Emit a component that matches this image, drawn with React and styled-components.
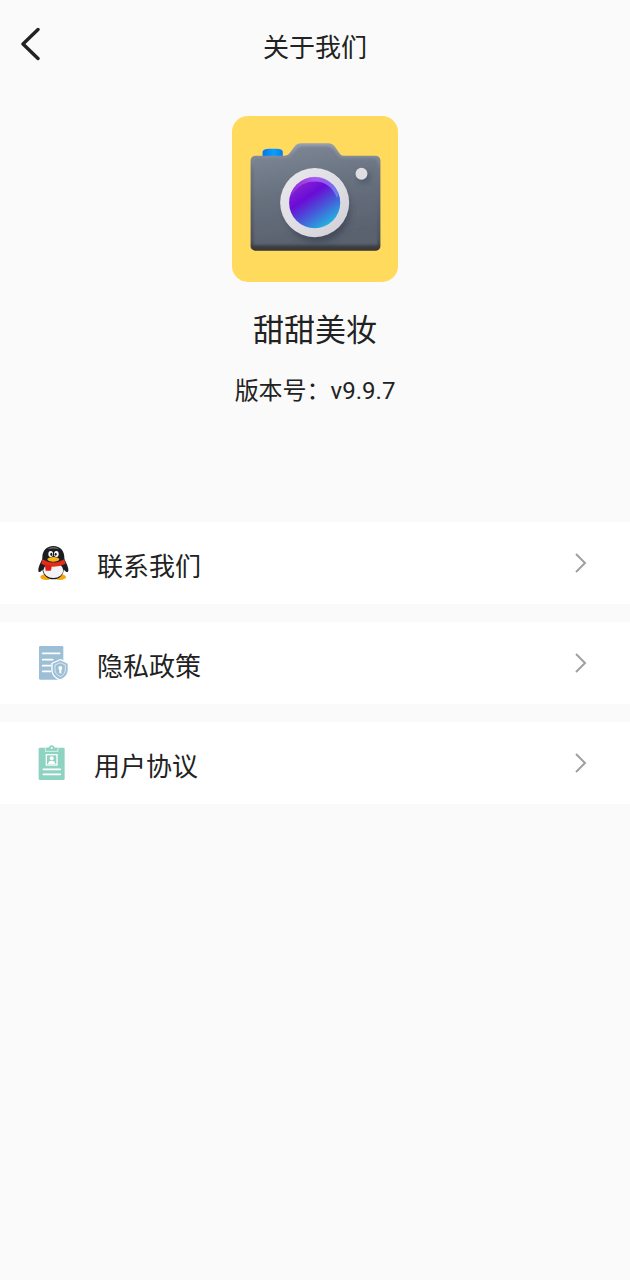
import React from "react";
import styled, { createGlobalStyle } from "styled-components";

const App = () => {
  return (
    <>
      <GlobalStyle />
      <Header>
        <BackButton type="button" aria-label="返回">
          <BackIcon />
        </BackButton>
        <Title>关于我们</Title>
      </Header>

      <main>
        <AppInfo>
          <CameraLogo />
          <AppName>甜甜美妆</AppName>
          <Version>版本号：v9.9.7</Version>
        </AppInfo>

        <Menu>
          <MenuItem href="#contact">
            <PenguinIcon />
            <Label>联系我们</Label>
            <ArrowIcon />
          </MenuItem>
          <MenuItem href="#privacy">
            <PrivacyIcon />
            <Label>隐私政策</Label>
            <ArrowIcon />
          </MenuItem>
          <MenuItem href="#agreement">
            <AgreementIcon />
            <Label>用户协议</Label>
            <ArrowIcon />
          </MenuItem>
        </Menu>
      </main>
    </>
  );
};

export default App;

const BackIcon = () => (
  <svg width="20" height="34" viewBox="0 0 20 34" fill="none" aria-hidden="true">
    <path
      d="M18 2.5 3 17l15 14.5"
      stroke="#222"
      strokeWidth="3.4"
      strokeLinecap="round"
      strokeLinejoin="round"
    />
  </svg>
);

const ArrowIcon = () => (
  <svg width="12" height="20" viewBox="0 0 12 20" fill="none" aria-hidden="true">
    <path d="M1 1l9 9-9 9" stroke="#a0a0a0" strokeWidth="2" />
  </svg>
);

const CameraLogo = () => (
  <svg width="166" height="166" viewBox="21 23 500 500" role="img" aria-label="甜甜美妆">
    <defs>
      <linearGradient id="body" x1="0" y1="0" x2="0.25" y2="1">
        <stop offset="0" stopColor="#808997" />
        <stop offset="0.5" stopColor="#68717f" />
        <stop offset="1" stopColor="#5a6270" />
      </linearGradient>
      <linearGradient id="edge" x1="0" y1="0" x2="0" y2="1">
        <stop offset="0" stopColor="#99a2b0" />
        <stop offset="0.25" stopColor="#6c7481" />
        <stop offset="0.9" stopColor="#4c525d" />
        <stop offset="1" stopColor="#363434" />
      </linearGradient>
      <linearGradient id="button" x1="0" y1="0" x2="1" y2="0">
        <stop offset="0" stopColor="#0873ed" />
        <stop offset="0.55" stopColor="#08a1fa" />
        <stop offset="1" stopColor="#0879f0" />
      </linearGradient>
      <linearGradient id="ring" x1="0" y1="0" x2="1" y2="1">
        <stop offset="0" stopColor="#e9e8ec" />
        <stop offset="0.6" stopColor="#dddce3" />
        <stop offset="1" stopColor="#cfcdd4" />
      </linearGradient>
      <linearGradient id="lens" x1="0.2" y1="0.15" x2="0.75" y2="0.95">
        <stop offset="0" stopColor="#8420d4" />
        <stop offset="0.3" stopColor="#6a0cd6" />
        <stop offset="0.6" stopColor="#4a52d8" />
        <stop offset="1" stopColor="#22b4df" />
      </linearGradient>
      <linearGradient id="shine" x1="0" y1="0" x2="1" y2="0">
        <stop offset="0" stopColor="#bd5bea" stopOpacity="0.4" />
        <stop offset="0.5" stopColor="#c483ff" />
        <stop offset="1" stopColor="#75a8f5" />
      </linearGradient>
      <filter id="soft" x="-30%" y="-30%" width="160%" height="160%">
        <feGaussianBlur stdDeviation="9" />
      </filter>
      <filter id="bevel" x="-10%" y="-10%" width="120%" height="120%">
        <feGaussianBlur stdDeviation="3" />
      </filter>
    </defs>
    <rect x="21" y="23" width="500" height="500" rx="48" fill="#ffda5c" />
    <path d="M113 148v-17q2-9 20-9h22q18 0 19 9v17z" fill="url(#button)" />
    <path
      d="M90 143h88q11 0 18-10l14-19q7-9 19-9h82q12 0 19 9l17 24q4 5 12 5h96q12 2 13 14v260q-2 11-13 12H90q-12-3-13-12V157q1-12 13-14z"
      fill="url(#edge)"
    />
    <path
      d="M94 151h88q13 0 20-11l14-18q6-8 16-8h77q10 0 16 8l17 23q5 6 15 6h94l8 8v252H86V159z"
      fill="url(#body)"
      filter="url(#bevel)"
    />
    <circle cx="279" cy="305" r="98" fill="#353b4b" opacity="0.6" filter="url(#soft)" />
    <circle cx="418" cy="207" r="18" fill="#353b4b" opacity="0.5" filter="url(#soft)" />
    <circle cx="270" cy="284" r="104" fill="url(#ring)" />
    <circle cx="270" cy="284" r="77" fill="url(#lens)" />
    <path
      d="M198 262c9-34 40-56 73-56 34 0 62 22 71 55l-5 8c-12-31-35-49-66-49-30 0-53 14-67 39z"
      fill="url(#shine)"
      opacity="0.6"
    />
    <circle cx="411" cy="197" r="18" fill="#dedde2" />
  </svg>
);

const PenguinIcon = () => (
  <svg width="31" height="36" viewBox="0 0 93 108" aria-hidden="true">
    <ellipse cx="25" cy="96" rx="18" ry="9" fill="#f7a70b" />
    <ellipse cx="66" cy="96" rx="18" ry="9" fill="#f7a70b" />
    <path
      d="M46 3C25 3 13 18 13 37c0 5-1 8-4 13C4 60 0 70 1 77c1 7 7 4 12-3 4 19 17 29 33 29s28-10 32-29c6 7 12 10 13 3 1-7-3-17-8-27-3-5-4-8-4-13C79 18 67 3 46 3z"
      fill="#1c1d22"
    />
    <path d="M28 13q18-14 36 0-18-5-36 0z" fill="#6d6e72" />
    <ellipse cx="46" cy="76" rx="30" ry="23" fill="#f4f4f6" />
    <ellipse cx="38" cy="27" rx="7" ry="9" fill="#fff" />
    <ellipse cx="55" cy="27" rx="7" ry="9" fill="#fff" />
    <ellipse cx="40" cy="28" rx="3" ry="5" fill="#151515" />
    <ellipse cx="53" cy="28" rx="3" ry="4" fill="#151515" />
    <path d="M13 43q33 20 66 0l4 13Q68 64 47 65q-22 0-37-9z" fill="#e52c1c" />
    <path d="M22 58l19 4q0 9-3 15H23q-3-9-1-19z" fill="#de1d16" />
    <ellipse cx="46" cy="43" rx="18" ry="7" fill="#f9b512" />
  </svg>
);

const PrivacyIcon = () => (
  <svg width="31" height="36" viewBox="0 0 93 108" aria-hidden="true">
    <rect x="3" y="3" width="73" height="101" rx="4" fill="#9dbfd6" />
    <path
      d="M14 25h51M14 44h30M14 62h24M14 79h24"
      stroke="#fff"
      strokeWidth="5"
      strokeLinecap="round"
    />
    <path
      d="M67 45l23 11v19c0 14-9 23-23 29-15-6-24-15-24-29V56z"
      fill="#9dbfd6"
      stroke="#fff"
      strokeWidth="6"
    />
    <path d="M67 46l22 10v19c0 13-9 22-22 28-14-6-23-15-23-28V56z" fill="#9dbfd6" />
    <path
      d="M67 53l15 7v15c0 9-6 15-15 20-10-5-16-11-16-20V60z"
      fill="none"
      stroke="#fff"
      strokeWidth="2"
    />
    <circle cx="67" cy="69" r="6" fill="#fff" />
    <path d="M64 71h6v14h-6z" fill="#fff" />
  </svg>
);

const AgreementIcon = () => (
  <svg width="28" height="36" viewBox="0 0 84 108" aria-hidden="true">
    <rect x="2" y="8" width="78" height="97" rx="4" fill="#8ed3c2" />
    <path d="M23 8h9q3-7 9-7t9 7h9v10H23z" fill="#8ed3c2" />
    <path d="M22 9v10h38V9" fill="none" stroke="#fff" strokeWidth="2" />
    <circle cx="41" cy="9" r="3" fill="#fff" />
    <rect x="25" y="29" width="32" height="31" fill="none" stroke="#fff" strokeWidth="4" />
    <circle cx="41" cy="40" r="6" fill="#fff" />
    <path d="M30 57q1-10 11-10t11 10z" fill="#fff" />
    <path d="M16 73h51M16 88h51" stroke="#fff" strokeWidth="5" strokeLinecap="round" />
  </svg>
);

const GlobalStyle = createGlobalStyle`
  body {
    margin: 0;
    background: #fafafa;
    color: #222;
    font-family: Roboto, "Noto Sans CJK SC", sans-serif;
  }
`;

const Header = styled.header`
  display: grid;
  grid-template-columns: 60px 1fr 60px;
  align-items: center;
  height: 88px;
`;

const BackButton = styled.button`
  display: flex;
  justify-content: center;
  padding: 12px;
  border: none;
  background: none;
  cursor: pointer;
`;

const Title = styled.h1`
  margin: 0;
  padding-top: 8px;
  font-size: 26px;
  line-height: 40px;
  font-weight: 400;
  text-align: center;
`;

const AppInfo = styled.section`
  display: flex;
  flex-direction: column;
  align-items: center;
  padding: 28px 0 111px;
`;

const AppName = styled.h2`
  margin: 25px 0 0;
  font-size: 31px;
  line-height: 48px;
  font-weight: 400;
`;

const Version = styled.p`
  margin: 16px 0 0;
  font-size: 24px;
  line-height: 40px;
`;

const Menu = styled.nav`
  display: flex;
  flex-direction: column;
  gap: 18px;
`;

const MenuItem = styled.a`
  display: flex;
  align-items: center;
  height: 82px;
  padding: 0 43px 0 38px;
  background: #fff;
  color: inherit;
  text-decoration: none;
`;

const Label = styled.span`
  flex: 1;
  padding: 8px 0 0 28px;
  font-size: 26px;
  line-height: 40px;
`;
